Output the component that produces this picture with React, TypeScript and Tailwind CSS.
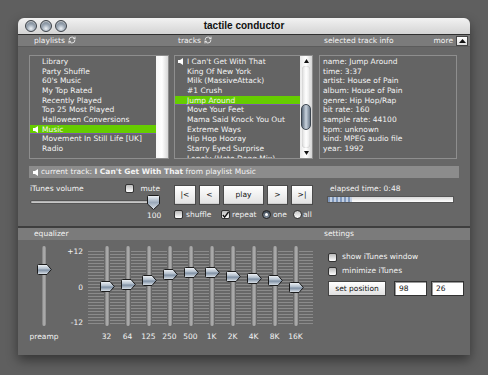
import { RefreshCw } from "lucide-react";

const playlists = [
  "Library",
  "Party Shuffle",
  "60's Music",
  "My Top Rated",
  "Recently Played",
  "Top 25 Most Played",
  "Halloween Conversions",
  "Music",
  "Movement In Still Life [UK]",
  "Radio",
];

const tracks = [
  "Sweet Dreams",
  "I Can't Get With That",
  "King Of New York",
  "Milk (MassiveAttack)",
  "#1 Crush",
  "Jump Around",
  "Move Your Feet",
  "Mama Said Knock You Out",
  "Extreme Ways",
  "Hip Hop Hooray",
  "Starry Eyed Surprise",
  "Lonely (Hate Dogg Mix)",
];

const info = [
  "name: Jump Around",
  "time: 3:37",
  "artist: House of Pain",
  "album: House of Pain",
  "genre: Hip Hop/Rap",
  "bit rate: 160",
  "sample rate: 44100",
  "bpm: unknown",
  "kind: MPEG audio file",
  "year: 1992",
];

// thumb centre, px from top of the slider track
const bands = [
  { label: "32", y: 40 },
  { label: "64", y: 38 },
  { label: "125", y: 34 },
  { label: "250", y: 28 },
  { label: "500", y: 26 },
  { label: "1K", y: 26 },
  { label: "2K", y: 30 },
  { label: "4K", y: 32 },
  { label: "8K", y: 34 },
  { label: "16K", y: 41 },
];

function Speaker() {
  return (
    <svg width="5" height="7" viewBox="0 0 5 7">
      <path d="M0 2h2l3-2v7L2 5H0z" fill="#fff" />
    </svg>
  );
}

function Refresh() {
  return <RefreshCw size={8} strokeWidth={2.6} className="text-[#eee]" />;
}

function Checkbox({ checked = false }: { checked?: boolean }) {
  return (
    <div className="w-[9px] h-[9px] rounded-[2px] border border-[#333] bg-gradient-to-b from-[#b9b9b9] to-white flex items-center justify-center shrink-0">
      {checked && (
        <svg width="8" height="8" viewBox="0 0 8 8">
          <path d="M1 4l2 2.5L7.5 0.5" fill="none" stroke="#111" strokeWidth="1.6" />
        </svg>
      )}
    </div>
  );
}

function Radio({ on = false }: { on?: boolean }) {
  return on ? (
    <div className="w-[9px] h-[9px] rounded-full border border-[#222] bg-gradient-to-b from-[#3c4652] to-[#8795a5] flex items-center justify-center shrink-0">
      <div className="w-[3px] h-[3px] rounded-full bg-white" />
    </div>
  ) : (
    <div className="w-[9px] h-[9px] rounded-full border border-[#333] bg-gradient-to-b from-[#c4c4c4] to-white shrink-0" />
  );
}

function EqThumb() {
  return (
    <svg width="15" height="11" viewBox="0 0 15 11">
      <defs>
        <linearGradient id="eqg" x1="0" y1="0" x2="0" y2="1">
          <stop offset="0" stopColor="#f4f7fa" />
          <stop offset="0.45" stopColor="#aebbc9" />
          <stop offset="0.55" stopColor="#7d8ea2" />
          <stop offset="1" stopColor="#e2e8ee" />
        </linearGradient>
      </defs>
      <path
        d="M1.5 .5h8.5l4.3 5-4.3 5H1.5a1 1 0 0 1-1-1V1.5a1 1 0 0 1 1-1z"
        fill="url(#eqg)"
        stroke="#1c1c1c"
      />
    </svg>
  );
}

function VolThumb() {
  return (
    <svg width="13" height="15" viewBox="0 0 13 15">
      <defs>
        <linearGradient id="vg" x1="0" y1="0" x2="0" y2="1">
          <stop offset="0" stopColor="#f4f7fa" />
          <stop offset="0.5" stopColor="#9aa9ba" />
          <stop offset="1" stopColor="#dfe5ec" />
        </linearGradient>
      </defs>
      <path
        d="M1.5 .5h10a1 1 0 0 1 1 1v7.5l-6 5.5-6-5.5V1.5a1 1 0 0 1 1-1z"
        fill="url(#vg)"
        stroke="#1c1c1c"
      />
    </svg>
  );
}

function Row({
  text,
  selected,
  playing,
}: {
  text: string;
  selected?: boolean;
  playing?: boolean;
}) {
  return (
    <div
      className={
        "flex items-center h-[9.67px] whitespace-nowrap " +
        (selected ? "bg-[#66cc00] shadow-[inset_0_-1px_0_#7a5aa6]" : "")
      }
    >
      <div className="w-[12px] pl-[3px] flex items-center shrink-0">
        {playing && <Speaker />}
      </div>
      <span>{text}</span>
    </div>
  );
}

function Btn({ label, w }: { label: string; w: string }) {
  return (
    <div
      className={
        w +
        " h-[20px] flex items-center justify-center border border-[#4a4a4a] bg-gradient-to-b from-white to-[#e2e2e2] text-[#111] shadow-[inset_0_-1px_0_#cfcfcf]"
      }
    >
      {label}
    </div>
  );
}

export default function App() {
  return (
    <div className="w-[488px] h-[375px] bg-[#5f5f5f] pl-[18px] pt-[18px] overflow-hidden font-['DejaVu_Sans',sans-serif] text-[7.5px] leading-[9.67px] text-[#f3f3f3]">
      <div className="w-[452px] h-[337px] bg-[#676767] rounded-t-[6px] shadow-[0_5px_12px_rgba(0,0,0,0.45)] flex flex-col">
        {/* title bar */}
        <div className="h-[16px] rounded-t-[6px] bg-gradient-to-b from-[#f2f2f2] to-[#d4d4d4] grid grid-cols-[1fr_auto_1fr] items-center border-b border-[#2f2f2f] box-content">
          <div className="flex gap-[3px] pl-[7px]">
            {[0, 1, 2].map((i) => (
              <div
                key={i}
                className="w-[12px] h-[12px] rounded-full border border-[#3f444a] bg-[radial-gradient(circle_at_50%_75%,#eef2f6_0%,#9aa6b3_45%,#5f6a76_100%)] shadow-[inset_0_1px_1px_rgba(255,255,255,0.6)]"
              />
            ))}
          </div>
          <div className="font-['Liberation_Sans',sans-serif] font-bold text-[10px] text-[#111]">
            tactile conductor
          </div>
          <div />
        </div>

        {/* column headers */}
        <div className="h-[12px] bg-[#7b7b7b] flex items-center pl-[16px] border-b border-[#5c5c5c]">
          <div className="w-[144px] flex items-center gap-[3px]">
            playlists <Refresh />
          </div>
          <div className="w-[146px] flex items-center gap-[3px]">
            tracks <Refresh />
          </div>
          <div className="flex-1 flex items-center pr-[2px]">
            <span className="flex-1">selected track info</span>
            <span className="mr-[3px]">more</span>
            <div className="w-[12px] h-[10px] bg-gradient-to-b from-white to-[#dedede] border border-[#444] flex items-center justify-center">
              <svg width="7" height="4" viewBox="0 0 7 4">
                <path d="M3.5 0L7 4H0z" fill="#111" />
              </svg>
            </div>
          </div>
        </div>

        {/* lists */}
        <div className="flex pl-[11px] pt-[8px]">
          <div className="flex w-[140px] h-[104px] border border-[#8e8e8e] bg-[#646464]">
            <div className="flex-1 pt-[1px] overflow-hidden">
              {playlists.map((p) => (
                <Row key={p} text={p} selected={p === "Music"} playing={p === "Music"} />
              ))}
            </div>
            <div className="w-[12px] bg-gradient-to-r from-[#f6f6f6] via-white to-[#d8d8d8]" />
          </div>

          <div className="flex w-[139px] h-[104px] border border-[#8e8e8e] bg-[#646464] ml-[5px]">
            <div className="flex-1 overflow-hidden">
              <div className="mt-[-8.5px]">
                {tracks.map((t) => (
                  <Row
                    key={t}
                    text={t}
                    selected={t === "Jump Around"}
                    playing={t === "I Can't Get With That"}
                  />
                ))}
              </div>
            </div>
            <div className="w-[12px] bg-gradient-to-r from-[#e9e9e9] via-white to-[#d4d4d4] flex flex-col items-center">
              <div className="h-[10px] flex items-center">
                <svg width="5" height="4" viewBox="0 0 5 4">
                  <path d="M2.5 0L5 4H0z" fill="#111" />
                </svg>
              </div>
              <div className="relative flex-1 w-[8px] rounded-full bg-gradient-to-r from-[#dcdcdc] via-white to-[#e6e6e6] shadow-[inset_0_0_1px_#999]">
                <div className="absolute left-[-1px] top-[38px] w-[10px] h-[26px] rounded-full border border-[#3d4650] bg-gradient-to-r from-[#5d6b7b] via-[#c9d3de] to-[#6c7a8a]" />
              </div>
              <div className="h-[10px] flex items-center">
                <svg width="5" height="4" viewBox="0 0 5 4">
                  <path d="M0 0h5L2.5 4z" fill="#111" />
                </svg>
              </div>
            </div>
          </div>

          <div className="w-[138px] h-[104px] border border-[#8e8e8e] bg-[#646464] ml-[6px] pl-[3px] pt-[1px] whitespace-nowrap">
            {info.map((l) => (
              <div key={l} className="h-[9.67px] flex items-center">
                {l}
              </div>
            ))}
          </div>
        </div>

        {/* current track */}
        <div className="ml-[11px] mt-[7px] w-[430px] h-[12px] bg-[#8c8c8c] flex items-center pl-[4px] gap-[3px] whitespace-nowrap">
          <Speaker />
          <span>
            current track: <b className="font-bold">I Can't Get With That</b> from playlist Music
          </span>
        </div>

        {/* transport */}
        <div className="h-[48px] flex pl-[11px]">
          <div className="w-[131px] pl-[1px] pt-[6px] flex flex-col">
            <div className="h-[10px] flex items-center justify-between">
              <span>iTunes volume</span>
              <div className="flex items-center gap-[6px]">
                <Checkbox />
                <span>mute</span>
              </div>
            </div>
            <div className="relative h-[15px] mt-[1px]">
              <div className="absolute left-0 right-[6px] top-[5px] h-[4px] rounded-full bg-gradient-to-b from-[#8f8f8f] via-[#d8d8d8] to-[#b5b5b5] border border-[#555]" />
              <div className="absolute left-[117px] top-0">
                <VolThumb />
              </div>
            </div>
            <div className="h-[10px] pl-[117px] mt-[1px] flex items-center">100</div>
          </div>

          <div className="w-[139px] ml-[14px] pt-[7px] flex flex-col">
            <div className="flex gap-[3px]">
              <Btn label="|<" w="w-[22px]" />
              <Btn label="<" w="w-[21px]" />
              <Btn label="play" w="w-[41px]" />
              <Btn label=">" w="w-[21px]" />
              <Btn label=">|" w="w-[22px]" />
            </div>
            <div className="h-[9px] mt-[5px] flex items-center whitespace-nowrap">
              <Checkbox />
              <span className="ml-[3px] w-[35px]">shuffle</span>
              <Checkbox checked />
              <span className="ml-[2px] w-[30px]">repeat</span>
              <Radio on />
              <span className="ml-[2px] w-[20px]">one</span>
              <Radio />
              <span className="ml-[1px]">all</span>
            </div>
          </div>

          <div className="w-[127px] ml-[14px] pt-[6px] flex flex-col">
            <div className="h-[10px] pl-[3px] flex items-center">elapsed time: 0:48</div>
            <div className="mt-[2px] h-[7px] border border-[#555] bg-gradient-to-b from-[#d9d9d9] to-white flex">
              <div className="w-[24px] h-full bg-[repeating-linear-gradient(90deg,#7f98bd_0px,#7f98bd_2px,#c3d0e3_2px,#c3d0e3_4px)]" />
            </div>
          </div>
        </div>

        {/* equalizer / settings header */}
        <div className="border-t-2 border-[#3e3e3e] h-[14px] bg-[#7b7b7b] flex items-center pl-[16px]">
          <span className="w-[290px]">equalizer</span>
          <span>settings</span>
        </div>

        {/* equalizer body */}
        <div className="flex flex-1 pl-[11px]">
          <div className="flex flex-col">
            <div className="flex h-[92px] pt-[6px]">
              {/* preamp */}
              <div className="w-[30px] flex justify-center">
                <div className="relative w-[4px] h-[80px] rounded-full bg-gradient-to-r from-[#7c7c7c] via-[#b4b4b4] to-[#8a8a8a]">
                  <div className="absolute left-[-5px] top-[18px]">
                    <EqThumb />
                  </div>
                </div>
              </div>
              {/* dB scale */}
              <div className="w-[25px] flex flex-col items-end pr-[1px] text-[#f3f3f3]">
                <div className="h-[9px] mt-[1px] flex items-center">+12</div>
                <div className="h-[9px] mt-[27px] flex items-center">0</div>
                <div className="h-[9px] mt-[26px] flex items-center">-12</div>
              </div>
              {/* bands over tick lines */}
              <div className="ml-[4px] w-[225px] h-[80px] pl-[8px] flex bg-no-repeat bg-[repeating-linear-gradient(180deg,#8b8b8b_0px,#8b8b8b_1px,transparent_1px,transparent_3px)] [background-size:100%_74px] [background-position:0_5px]">
                {bands.map((b) => (
                  <div key={b.label} className="w-[21px] flex justify-center">
                    <div className="relative w-[4px] h-[80px] rounded-full bg-gradient-to-r from-[#7c7c7c] via-[#b4b4b4] to-[#8a8a8a] shadow-[0_0_0_1px_#676767]">
                      <div className="absolute left-[-5px]" style={{ top: b.y - 5 }}>
                        <EqThumb />
                      </div>
                    </div>
                  </div>
                ))}
              </div>
            </div>
            <div className="flex h-[10px] items-center">
              <div className="w-[30px] text-center">preamp</div>
              <div className="w-[29px]" />
              <div className="pl-[8px] flex">
                {bands.map((b) => (
                  <div key={b.label} className="w-[21px] text-center">
                    {b.label}
                  </div>
                ))}
              </div>
            </div>
          </div>

          {/* settings */}
          <div className="ml-[15px] pt-[12px] flex flex-col">
            <div className="flex items-center gap-[5px] h-[10px]">
              <Checkbox />
              <span>show iTunes window</span>
            </div>
            <div className="flex items-center gap-[5px] h-[10px] mt-[4px]">
              <Checkbox />
              <span>minimize iTunes</span>
            </div>
            <div className="flex mt-[5px] gap-[4px] text-[#111]">
              <div className="w-[58px] h-[15px] flex items-center justify-center border border-[#444] bg-gradient-to-b from-white to-[#e0e0e0]">
                set position
              </div>
              <div className="w-[33px] h-[15px] ml-[4px] flex items-center pl-[4px] bg-white border border-[#333] shadow-[inset_1px_1px_0_#999]">
                98
              </div>
              <div className="w-[33px] h-[15px] flex items-center pl-[4px] bg-white border border-[#333] shadow-[inset_1px_1px_0_#999]">
                26
              </div>
            </div>
          </div>
        </div>
      </div>
    </div>
  );
}
